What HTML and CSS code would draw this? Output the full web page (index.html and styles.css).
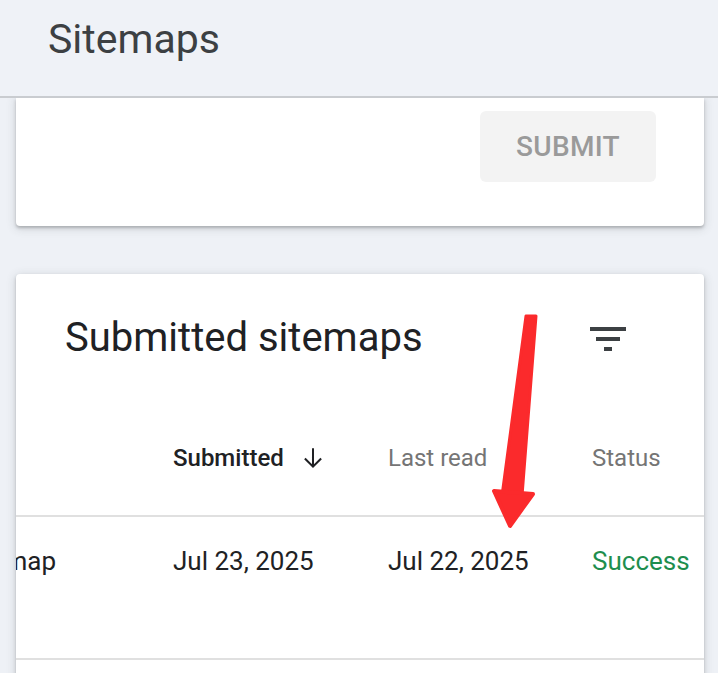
FILE: index.html
```html
<!DOCTYPE html>
<html lang="en">
<head>
<meta charset="utf-8">
<title>Sitemaps</title>
<link rel="stylesheet" href="styles.css">
</head>
<body>
<header class="topbar">
  <h1 class="page-title">Sitemaps</h1>
</header>

<main class="content">
  <section class="card add-card">
    <button class="submit-btn" type="button" disabled>SUBMIT</button>
  </section>

  <section class="card list-card">
    <div class="list-head">
      <h2 class="list-title">Submitted sitemaps</h2>
      <button class="filter-btn" type="button" aria-label="Filter">
        <svg width="36" height="26" viewBox="0 0 36 26">
          <rect x="0" y="2" width="36" height="4" fill="#3c4043"/>
          <rect x="6" y="12" width="24" height="4" fill="#3c4043"/>
          <rect x="14" y="22" width="8" height="4" fill="#3c4043"/>
        </svg>
      </button>
    </div>

    <div class="table">
      <div class="row head-row">
        <div class="cell cell-name"></div>
        <div class="cell cell-sorted">Submitted
          <svg class="sort-icon" width="26" height="26" viewBox="0 0 24 24">
            <path d="M12 3v17M4.5 12.5 12 20l7.5-7.5" fill="none" stroke="#202124" stroke-width="1.9"/>
          </svg>
        </div>
        <div class="cell cell-muted">Last read</div>
        <div class="cell cell-muted">Status</div>
      </div>
      <div class="row body-row">
        <div class="cell cell-name"><span>/sitemap</span></div>
        <div class="cell">Jul 23, 2025</div>
        <div class="cell">Jul 22, 2025</div>
        <div class="cell cell-ok">Success</div>
      </div>
      <div class="row body-row"></div>
    </div>
  </section>
</main>

<svg class="pointer" width="60" height="230" viewBox="480 305 60 230">
  <polygon points="526,316 536,316 522,496 502,496" fill="#fb2a2c" stroke="#fb2a2c" stroke-width="3" stroke-linejoin="round"/>
  <polygon points="494,491 533,494 510,526" fill="#fb2a2c" stroke="#fb2a2c" stroke-width="4" stroke-linejoin="round"/>
</svg>
</body>
</html>
```

FILE: styles.css
```css
html, body {
  margin: 0;
  padding: 0;
}

body {
  background: #eef1f6;
  font-family: Roboto, "Noto Sans", Arial, sans-serif;
  color: #202124;
  width: 718px;
  height: 673px;
  overflow: hidden;
  position: relative;
}

.topbar {
  height: 98px;
  background: #eff2f7;
  border-bottom: 2px solid #c9ccd0;
  box-sizing: border-box;
  padding: 13px 0 0 48px;
  position: relative;
  z-index: 2;
}

.page-title {
  margin: 0;
  font-size: 41px;
  font-weight: 400;
  line-height: 52px;
  color: #3c4043;
}

.content {
  padding: 0 14px 0 16px;
  display: flex;
  flex-direction: column;
  gap: 48px;
}

.card {
  background: #fff;
  border-radius: 0 0 4px 4px;
  box-shadow: 0 2px 3px rgba(60, 64, 67, 0.3), 0 2px 8px 2px rgba(60, 64, 67, 0.12);
}

.add-card {
  height: 128px;
  box-sizing: border-box;
  display: flex;
  justify-content: flex-end;
  align-items: flex-start;
  padding: 13px 48px 0 0;
}

.submit-btn {
  width: 176px;
  height: 71px;
  border: none;
  border-radius: 6px;
  background: #f3f3f3;
  color: #9a9a9a;
  font-family: Roboto, Arial, sans-serif;
  font-size: 28px;
  font-weight: 500;
  letter-spacing: 0.3px;
}

.list-card {
  border-radius: 4px 4px 0 0;
  height: 420px;
  overflow: hidden;
}

.list-head {
  display: flex;
  align-items: center;
  justify-content: space-between;
  padding: 38px 78px 0 49px;
  height: 52px;
}

.list-title {
  margin: 0;
  font-size: 40px;
  font-weight: 400;
  line-height: 48px;
  color: #202124;
}

.filter-btn {
  border: none;
  background: none;
  padding: 0;
  display: flex;
}

.table {
  margin-top: 37px;
}

.row {
  display: grid;
  grid-template-columns: 157px 215px 204px 1fr;
}

.head-row {
  height: 114px;
  align-items: center;
  border-bottom: 2px solid #e0e0e0;
  font-size: 24px;
  line-height: 30px;
}

.body-row {
  height: 141px;
  align-items: start;
  border-bottom: 2px solid #e0e0e0;
  font-size: 26px;
  line-height: 30px;
  color: #202124;
}

.body-row .cell {
  margin-top: 29px;
}

.body-row + .body-row {
  border-bottom: none;
}

.cell {
  white-space: nowrap;
}

/* first column sits partly scrolled out of view on the left */
.cell-name {
  display: flex;
  justify-content: flex-end;
  overflow: hidden;
  padding-right: 117px;
}

.cell-sorted {
  font-weight: 500;
  color: #202124;
  display: flex;
  align-items: center;
  gap: 16px;
}

.cell-muted {
  color: #757575;
}

.cell-ok {
  color: #1e8e4e;
}

.pointer {
  position: absolute;
  left: 480px;
  top: 305px;
  z-index: 3;
}
```
